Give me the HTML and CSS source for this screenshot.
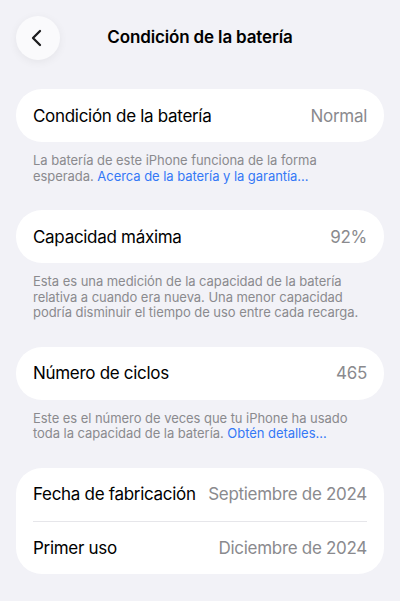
FILE: index.html
```html
<!DOCTYPE html>
<html lang="es">
<head>
    <meta charset="UTF-8">
    <meta name="viewport" content="width=device-width, initial-scale=1.0">
    <title>Condición de la batería</title>
    <link rel="stylesheet" href="styles.css">
</head>
<body>

    <!-- Top Bar -->
    <header class="nav-bar">
        <button class="back-btn" aria-label="Atrás">
            <svg width="14" height="18" viewBox="0 0 14 18">
                <path d="M10 2 L3 9 L10 16" fill="none" stroke="#1c1c1e" stroke-width="2.3" stroke-linecap="round" stroke-linejoin="round"/>
            </svg>
        </button>
        <h1 class="nav-title">Condición de la batería</h1>
    </header>

    <main class="content">
        <section class="group">
            <div class="card">
                <div class="row">
                    <span class="label">Condición de la batería</span>
                    <span class="value">Normal</span>
                </div>
            </div>
            <p class="footer">La batería de este iPhone funciona de la forma esperada. <a href="#" class="link">Acerca de la batería y la garantía…</a></p>
        </section>

        <section class="group">
            <div class="card">
                <div class="row">
                    <span class="label">Capacidad máxima</span>
                    <span class="value">92%</span>
                </div>
            </div>
            <p class="footer">Esta es una medición de la capacidad de la batería relativa a cuando era nueva. Una menor capacidad podría disminuir el tiempo de uso entre cada recarga.</p>
        </section>

        <section class="group">
            <div class="card">
                <div class="row">
                    <span class="label">Número de ciclos</span>
                    <span class="value">465</span>
                </div>
            </div>
            <p class="footer">Este es el número de veces que tu iPhone ha usado toda la capacidad de la batería. <a href="#" class="link">Obtén detalles…</a></p>
        </section>

        <section class="group">
            <div class="card">
                <div class="row">
                    <span class="label">Fecha de fabricación</span>
                    <span class="value">Septiembre de 2024</span>
                </div>
                <div class="row">
                    <span class="label">Primer uso</span>
                    <span class="value">Diciembre de 2024</span>
                </div>
            </div>
        </section>
    </main>

</body>
</html>
```

FILE: styles.css
```css
/* Reset */
* {
    margin: 0;
    padding: 0;
    box-sizing: border-box;
    font-family: 'Inter', 'Noto Sans', sans-serif;
}

body {
    background: #f2f2f7;
    color: #000;
    min-height: 100vh;
}

/* Navigation Bar */
.nav-bar {
    position: relative;
    height: 76px;
    padding: 16px 16px 0;
    display: flex;
    align-items: flex-start;
}

.back-btn {
    width: 44px;
    height: 44px;
    border-radius: 50%;
    border: none;
    background: #fafafc;
    box-shadow: 0 2px 10px rgba(0, 0, 0, 0.06);
    display: flex;
    align-items: center;
    justify-content: center;
    padding-right: 3px;
}

.nav-title {
    position: absolute;
    left: 0;
    right: 0;
    top: 27px;
    text-align: center;
    font-size: 17px;
    font-weight: 600;
    letter-spacing: -0.15px;
    pointer-events: none;
}

/* Grouped List */
.content {
    padding: 13px 16px 0;
}

.group {
    margin-bottom: 26px;
}

.card {
    background: #fff;
    border-radius: 26px;
    padding: 0 17px;
}

.row {
    height: 53px;
    display: flex;
    align-items: center;
    justify-content: space-between;
    font-size: 17px;
    letter-spacing: -0.3px;
}

.row + .row {
    border-top: 1px solid #e6e6ea;
}

.label {
    color: #000;
}

.value {
    color: #8a8a8e;
}

.footer {
    padding: 11px 17px 0;
    font-size: 13px;
    line-height: 15.5px;
    color: #8a8a8e;
    letter-spacing: -0.05px;
}

.link {
    color: #3478f6;
    text-decoration: none;
}
```
